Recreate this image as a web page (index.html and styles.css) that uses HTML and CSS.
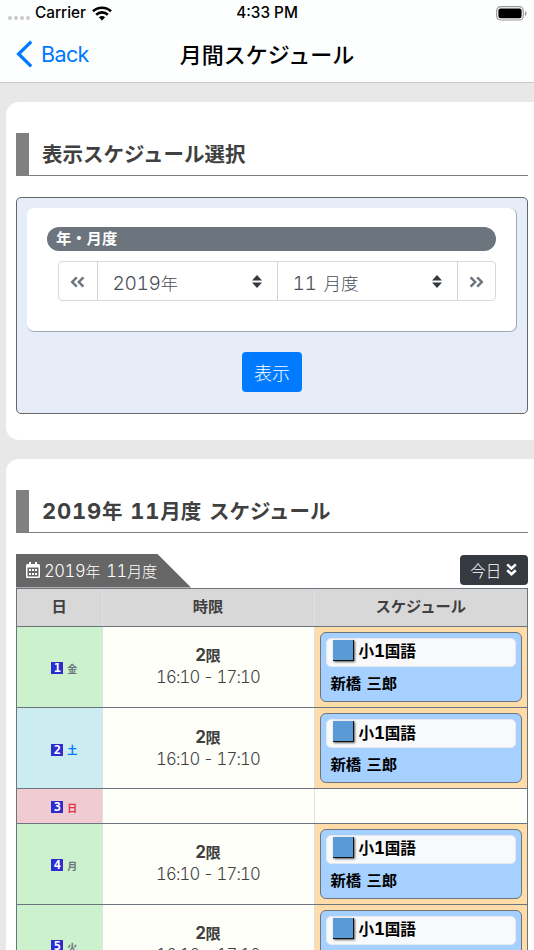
FILE: index.html
```
<!DOCTYPE html>
<html lang="ja">
<head>
  <meta charset="UTF-8">
  <meta name="viewport" content="width=device-width, initial-scale=1.0">
  <title>月間スケジュール</title>
  <link rel="stylesheet" href="styles.css">
</head>
<body>
  <header>
    <div class="statusbar">
      <div class="carrier">
        <span class="dots"><i></i><i></i><i></i><i></i></span>
        <span>Carrier</span>
        <svg width="20" height="15" viewBox="0 0 20 15" fill="none" stroke="#000" stroke-width="2.6">
          <path d="M1 5.3C6 .6 14 .6 19 5.3M4.2 8.7c3.3-3.1 8.3-3.1 11.6 0"/>
          <path d="M6.9 11.3c1.8-1.6 4.4-1.6 6.2 0L10 14.5z" fill="#000" stroke="none"/>
        </svg>
      </div>
      <div class="clock">4:33 PM</div>
      <svg class="battery" width="31" height="15" viewBox="0 0 31 15">
        <rect x=".7" y=".7" width="26.6" height="13.3" rx="4" fill="none" stroke="#999" stroke-width="1.2"/>
        <rect x="2.4" y="2.4" width="23.2" height="9.9" rx="2.2"/>
        <path d="M29 5v5c2-.8 2-4.2 0-5z" fill="#999"/>
      </svg>
    </div>
    <div class="navbar">
      <a class="back"><svg width="17" height="28" viewBox="0 0 17 28" fill="none" stroke="#007aff" stroke-width="3.3"><path d="M15.2 1.6 2.6 14l12.6 12.4"/></svg>Back</a>
      <div class="title">月間スケジュール</div>
    </div>
  </header>

  <main>
    <section class="card select-card">
      <h2>表示スケジュール選択</h2>
      <div class="panel">
        <div class="panel-inner">
          <div class="pill">年・月度</div>
          <div class="input-group">
            <button class="arrow"><svg width="15" height="12" viewBox="0 0 15 12"><path d="M6.8 1.3 2.2 6l4.6 4.7M13.4 1.3 8.8 6l4.6 4.7"/></svg></button>
            <div class="select year"><span><span class="num">2019</span>年</span><svg width="10" height="13" viewBox="0 0 10 13"><path d="M5 0l5 5.500H0zM5 13l5-5.500H0z"/></svg></div>
            <div class="select month"><span><span class="num">11</span> 月度</span><svg width="10" height="13" viewBox="0 0 10 13"><path d="M5 0l5 5.500H0zM5 13l5-5.500H0z"/></svg></div>
            <button class="arrow"><svg width="15" height="12" viewBox="0 0 15 12"><path d="M1.6 1.3 6.2 6l-4.6 4.7M8.2 1.3 12.8 6l-4.6 4.7"/></svg></button>
          </div>
        </div>
        <button class="show-btn">表示</button>
      </div>
    </section>

    <section class="card">
      <h2><span class="num">2019</span>年 <span class="num">11</span>月度 スケジュール</h2>
      <div class="table-head">
        <div class="tab">
          <svg width="14" height="16" viewBox="0 0 14 16"><path d="M3 0h2v2h4V0h2v2h1.500A1.500 1.500 0 0 1 14 3.500v11a1.500 1.500 0 0 1-1.500 1.500h-11A1.500 1.500 0 0 1 0 14.500v-11A1.500 1.500 0 0 1 1.500 2H3zM1.500 5.500v9h11v-9z" fill="#fff" fill-rule="evenodd"/><path d="M3 7h2v2H3zM6 7h2v2H6zM9 7h2v2H9zM3 11h2v2H3zM6 11h2v2H6zM9 11h2v2H9z" fill="#fff"/></svg>
          <span><span class="num">2019</span>年 <span class="num">11</span>月度</span>
        </div>
        <button class="today">今日<svg width="11" height="13" viewBox="0 0 11 13" fill="none" stroke="#fff" stroke-width="2.6"><path d="M1.200 1.400 5.500 5.400l4.300-4M1.200 7.200l4.300 4 4.300-4"/></svg></button>
      </div>
      <div class="schedule">
        <div class="row head"><div>日</div><div>時限</div><div>スケジュール</div></div>
        <div class="row">
          <div class="day"><b>1</b>金</div>
          <div class="time"><strong><span class="num">2</span>限</strong><span class="num">16:10 - 17:10</span></div>
          <div class="plan"><div class="event"><div class="subject"><i></i><span>小<span class="num">1</span>国語</span></div><p>新橋 三郎</p></div></div>
        </div>
        <div class="row">
          <div class="day sat"><b>2</b>土</div>
          <div class="time"><strong><span class="num">2</span>限</strong><span class="num">16:10 - 17:10</span></div>
          <div class="plan"><div class="event"><div class="subject"><i></i><span>小<span class="num">1</span>国語</span></div><p>新橋 三郎</p></div></div>
        </div>
        <div class="row empty">
          <div class="day sun"><b>3</b>日</div>
          <div class="time"></div>
          <div></div>
        </div>
        <div class="row">
          <div class="day"><b>4</b>月</div>
          <div class="time"><strong><span class="num">2</span>限</strong><span class="num">16:10 - 17:10</span></div>
          <div class="plan"><div class="event"><div class="subject"><i></i><span>小<span class="num">1</span>国語</span></div><p>新橋 三郎</p></div></div>
        </div>
        <div class="row">
          <div class="day"><b>5</b>火</div>
          <div class="time"><strong><span class="num">2</span>限</strong><span class="num">16:10 - 17:10</span></div>
          <div class="plan"><div class="event"><div class="subject"><i></i><span>小<span class="num">1</span>国語</span></div><p>新橋 三郎</p></div></div>
        </div>
      </div>
    </section>
  </main>
</body>
</html>
```

FILE: styles.css
```
* { box-sizing: border-box; }
body {
  margin: 0;
  height: 950px;
  overflow: hidden;
  background: #e8e8e8;
  color: #404040;
  font-family: "Noto Sans CJK JP", sans-serif;
  font-weight: 300;
}
button {
  font: inherit;
  padding: 0;
  border: none;
}
svg { flex: none; }
.num {
  font-family: Inter, "Noto Sans CJK JP", sans-serif;
  font-size: 1.09em;
  font-variant-numeric: tabular-nums;
  letter-spacing: -0.4px;
  line-height: 1;
}

/* header */
header {
  height: 83px;
  background: #fdfefe;
  border-bottom: 1px solid #c8c8c8;
}
.statusbar {
  display: grid;
  grid-template-columns: 1fr auto 1fr;
  align-items: center;
  height: 26px;
  padding: 0 7px;
  color: #000;
  font: 500 15.3px/26px Inter, sans-serif;
}
.carrier {
  display: flex;
  align-items: center;
}
.dots {
  display: flex;
  gap: 2px;
  margin: 9px 5px 0 1px;
}
.dots i {
  width: 4px;
  height: 4px;
  border-radius: 50%;
  background: #ccc;
}
.carrier svg { margin-left: 6px; }
.battery { justify-self: end; }
.navbar {
  display: grid;
  grid-template-columns: 1fr auto 1fr;
  align-items: center;
  height: 56px;
  padding: 0 16px;
}
.back {
  display: flex;
  align-items: center;
  gap: 8px;
  color: #007aff;
  font: 400 21.5px Inter, sans-serif;
  letter-spacing: -0.6px;
}
.title {
  margin-top: -3px;
  color: #000;
  font-size: 22px;
  font-weight: 500;
}

/* cards */
.card {
  margin: 19px 0 0 5.5px;
  padding: 31px 6px 0 10.5px;
  background: #fff;
  border-radius: 13px 0 0 13px;
}
.select-card { height: 338px; }
h2 {
  height: 43px;
  margin: 0;
  padding-left: 13px;
  border-left: 13px solid #808080;
  border-bottom: 1px solid #808080;
  font-size: 20.5px;
  font-weight: 700;
  line-height: 41px;
  word-spacing: 3px;
}
h2 .num {
  font-size: 22px;
  letter-spacing: 0.8px;
}
.panel {
  height: 217px;
  margin-top: 21px;
  padding: 10px;
  background: #e6edf9;
  border: 1px solid #666;
  border-radius: 5px;
}
.panel-inner {
  height: 124px;
  padding: 19px 20px 0;
  background: #fff;
  border: solid #a0a8b0;
  border-width: 0 1px 1px 0;
  border-radius: 7px;
}
.pill {
  height: 24px;
  padding-left: 9px;
  border-radius: 12px;
  background: #6c747d;
  color: #fff;
  font-size: 15.3px;
  font-weight: 700;
  line-height: 21px;
}
.input-group {
  display: flex;
  height: 40px;
  margin: 10px 0 0 11px;
  border: 1px solid #d5dade;
  border-radius: 4px;
}
.arrow {
  width: 37.5px;
  background: none;
}
.arrow svg {
  fill: none;
  stroke: #6c757d;
  stroke-width: 2.5;
}
.select {
  display: flex;
  flex: 1;
  align-items: center;
  justify-content: space-between;
  padding: 3px 15px 0;
  border-left: 1px solid #ced4da;
  color: #495057;
  font-size: 17.6px;
  word-spacing: 3px;
}
.select svg {
  margin-top: -3px;
  fill: #343a40;
}
.month { border-right: 1px solid #ced4da; }
.show-btn {
  display: block;
  width: 60px;
  height: 40px;
  margin: 20px auto 0;
  padding-bottom: 1px;
  border-radius: 4px;
  background: #007bff;
  color: #fff;
  font-size: 18px;
}

/* schedule */
.table-head {
  display: flex;
  justify-content: space-between;
  height: 34px;
  margin-top: 20.5px;
}
.tab {
  display: flex;
  align-items: center;
  gap: 4px;
  width: 175px;
  padding: 0 0 2px 10px;
  background: #666;
  clip-path: polygon(0 0, 141px 0, 100% 100%, 0 100%);
  color: #fff;
  font-size: 15.2px;
  word-spacing: 2.5px;
}
.today {
  display: flex;
  align-items: center;
  justify-content: center;
  gap: 5px;
  width: 68.5px;
  height: 30px;
  margin-top: 1px;
  border-radius: 4px;
  background: #343a40;
  color: #fff;
  font-size: 15.5px;
}
.schedule {
  border: 1px solid #6c757d;
  font-size: 15.3px;
}
.row {
  display: grid;
  grid-template-columns: 84.5px 212px 1fr;
  height: 81.25px;
  border-bottom: 1px solid #6c757d;
  background: #fffffa;
}
.row > div + div { border-left: 1px solid #dee2e6; }
.head {
  height: 38.25px;
  background: #d8d8d8;
  font-weight: 700;
  line-height: 33px;
  text-align: center;
}
.empty { height: 34.25px; }
.day {
  display: flex;
  align-items: center;
  justify-content: center;
  gap: 4px;
  padding: 3px 0 0 10px;
  background: #cbf1cd;
  color: #6c757d;
  font-size: 10px;
  font-weight: 700;
}
.day b {
  width: 12px;
  height: 12px;
  background: #2d2dcf;
  color: #fff;
  font: 700 12px/12px "DejaVu Sans Mono", monospace;
  text-align: center;
}
.sat { background: #cbecf1; color: #007bff; }
.sun { background: #f0cbd2; color: #dc3545; }
.time {
  display: flex;
  flex-direction: column;
  align-items: center;
  justify-content: center;
  padding-bottom: 1px;
  line-height: 23px;
}
.time strong { font-weight: 700; }
.time > .num {
  letter-spacing: -0.85px;
  line-height: 23px;
}
.plan {
  padding: 5px;
  background: #ffdca8;
}
.event {
  height: 70px;
  padding: 5px;
  background: #a5d0ff;
  border: 1px solid #6c757d;
  border-radius: 6px;
  color: #000;
  font-weight: 700;
}
.subject {
  display: flex;
  align-items: center;
  height: 29px;
  padding: 0 6px 4px;
  border: 1px solid #e5e9ee;
  border-radius: 5px;
  background: #f8f9fa;
  font-size: 15.6px;
  line-height: 20px;
}
.subject i {
  width: 21px;
  height: 21px;
  margin-right: 5px;
  background: #5b9bd5;
  border: solid #111;
  border-width: 0 1px 1px 0;
  box-shadow: 1px 1px 2px #555;
}
.event p {
  margin: 4px 0 0 5px;
  line-height: 22px;
  word-spacing: 2px;
}
```
